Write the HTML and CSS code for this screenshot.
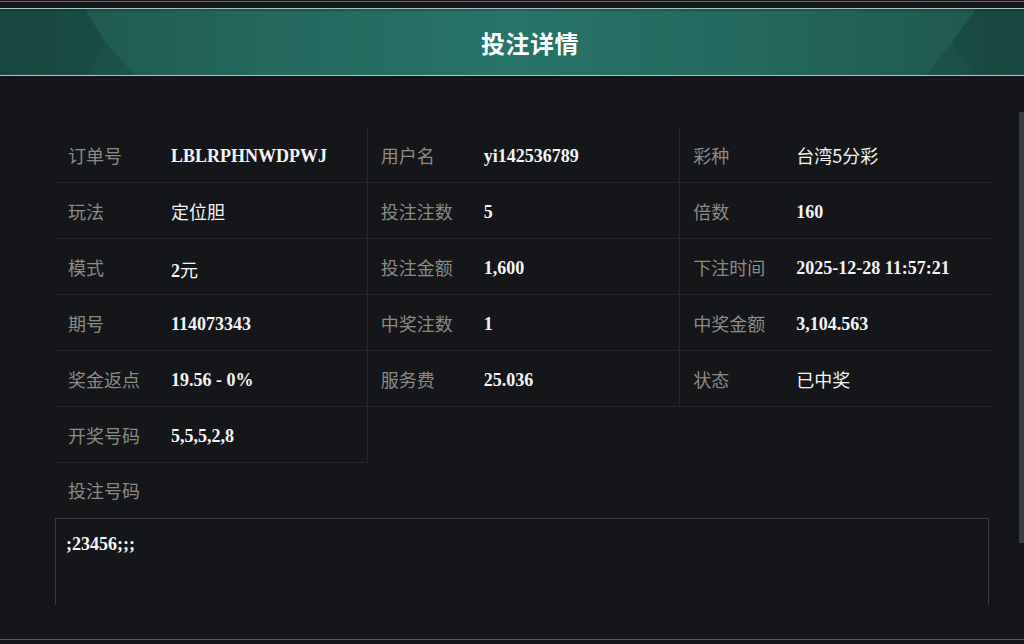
FILE: index.html
```html
<!DOCTYPE html>
<html lang="zh-CN">
<head>
<meta charset="utf-8">
<title>投注详情</title>
<link rel="stylesheet" href="styles.css">
</head>
<body>
<div class="modal">
  <div class="header">
    <svg class="corner corner-left" width="140" height="66" viewBox="0 0 140 66">
      <polygon points="0,0 85,0 105,33 88,66 0,66" fill="#0d2e2a" fill-opacity="0.35"/>
      <polygon points="105,33 135,66 88,66" fill="#0d2e2a" fill-opacity="0.22"/>
    </svg>
    <h1 class="title">投注详情</h1>
    <svg class="corner corner-right" width="100" height="66" viewBox="0 0 100 66">
      <polygon points="100,0 52,0 28,33 50,66 100,66" fill="#0d2e2a" fill-opacity="0.35"/>
      <polygon points="28,33 2,66 50,66" fill="#0d2e2a" fill-opacity="0.22"/>
    </svg>
  </div>
  <div class="content">
    <div class="scroll">
      <div class="grid">
        <div class="cell"><span class="label">订单号</span><span class="value">LBLRPHNWDPWJ</span></div>
        <div class="cell"><span class="label">用户名</span><span class="value">yi142536789</span></div>
        <div class="cell"><span class="label">彩种</span><span class="value cjk">台湾5分彩</span></div>
        <div class="cell"><span class="label">玩法</span><span class="value cjk">定位胆</span></div>
        <div class="cell"><span class="label">投注注数</span><span class="value">5</span></div>
        <div class="cell"><span class="label">倍数</span><span class="value">160</span></div>
        <div class="cell"><span class="label">模式</span><span class="value">2<span class="cjk">元</span></span></div>
        <div class="cell"><span class="label">投注金额</span><span class="value">1,600</span></div>
        <div class="cell"><span class="label">下注时间</span><span class="value">2025-12-28 11:57:21</span></div>
        <div class="cell"><span class="label">期号</span><span class="value">114073343</span></div>
        <div class="cell"><span class="label">中奖注数</span><span class="value">1</span></div>
        <div class="cell"><span class="label">中奖金额</span><span class="value">3,104.563</span></div>
        <div class="cell"><span class="label">奖金返点</span><span class="value">19.56 - 0%</span></div>
        <div class="cell"><span class="label">服务费</span><span class="value">25.036</span></div>
        <div class="cell"><span class="label">状态</span><span class="value cjk">已中奖</span></div>
        <div class="cell"><span class="label">开奖号码</span><span class="value">5,5,5,2,8</span></div>
      </div>
      <div class="bet-label">投注号码</div>
      <div class="bet-box">;23456;;;</div>
    </div>
    <div class="thumb"></div>
  </div>
  <div class="footer"></div>
</div>
</body>
</html>
```

FILE: styles.css
```css
html, body {
  margin: 0;
  padding: 0;
  background: #141619;
  height: 644px;
  overflow: hidden;
}

.modal {
  border-top: 1px solid #65686b;
  margin-top: 1px;
  padding-top: 6px;
  background: #141619;
}

.header {
  position: relative;
  height: 66px;
  border-top: 1px solid #a3c7be;
  border-bottom: 1px solid #a3c7be;
  background: linear-gradient(90deg, #1f544c 0%, #24675d 25%, #277468 50%, #24675d 75%, #1f554d 100%);
  display: flex;
  align-items: center;
  justify-content: center;
  overflow: hidden;
}

.header::before {
  content: "";
  position: absolute;
  left: 0;
  right: 0;
  top: 0;
  height: 3px;
  background: linear-gradient(180deg, rgba(20,40,38,0.45), rgba(20,40,38,0));
}

.corner {
  position: absolute;
  top: 0;
}

.corner-left { left: 0; }
.corner-right { right: 0; }

.title {
  margin: 0;
  padding-left: 36px;
  font-family: "Noto Sans CJK SC", "Noto Sans", sans-serif;
  font-weight: 700;
  font-size: 24px;
  color: #ffffff;
  letter-spacing: 0.5px;
  position: relative;
}

.content {
  position: relative;
  height: 529px;
  overflow: hidden;
}

.scroll {
  padding: 51px 31px 0 55px;
}

.grid {
  display: grid;
  grid-template-columns: repeat(3, 1fr);
}

.cell {
  display: flex;
  align-items: center;
  height: 55px;
  border-bottom: 1px solid #23272a;
  border-right: 1px solid #23272a;
  padding-left: 13px;
}

.cell:nth-child(3n) {
  border-right: none;
}

.label {
  width: 103px;
  flex: none;
  font-family: "Noto Sans CJK SC", "Noto Sans", sans-serif;
  font-size: 18px;
  color: #8b8b85;
}

.value {
  font-family: "Liberation Serif", "Noto Sans CJK SC", serif;
  font-weight: 700;
  font-size: 18px;
  color: #f4f4f4;
  white-space: nowrap;
  margin-top: 4px;
}

.cjk, .value.cjk {
  font-family: "Noto Sans CJK SC", "Noto Sans", sans-serif;
  font-weight: 400;
  color: #f4f4f4;
  margin-top: 0;
}

.bet-label {
  height: 55px;
  line-height: 55px;
  padding-left: 13px;
  font-family: "Noto Sans CJK SC", "Noto Sans", sans-serif;
  font-size: 18px;
  color: #8b8b85;
}

.bet-box {
  width: 912px;
  height: 160px;
  border: 1px solid #393c3f;
  padding: 12px 10px;
  font-family: "Liberation Serif", serif;
  font-weight: 700;
  font-size: 18px;
  line-height: 27px;
  color: #f4f4f4;
}

.thumb {
  position: absolute;
  right: 0;
  top: 36px;
  width: 5px;
  height: 431px;
  background: #3a3d40;
}

.footer {
  height: 34px;
  border-bottom: 1px solid #5a5d60;
}
```
